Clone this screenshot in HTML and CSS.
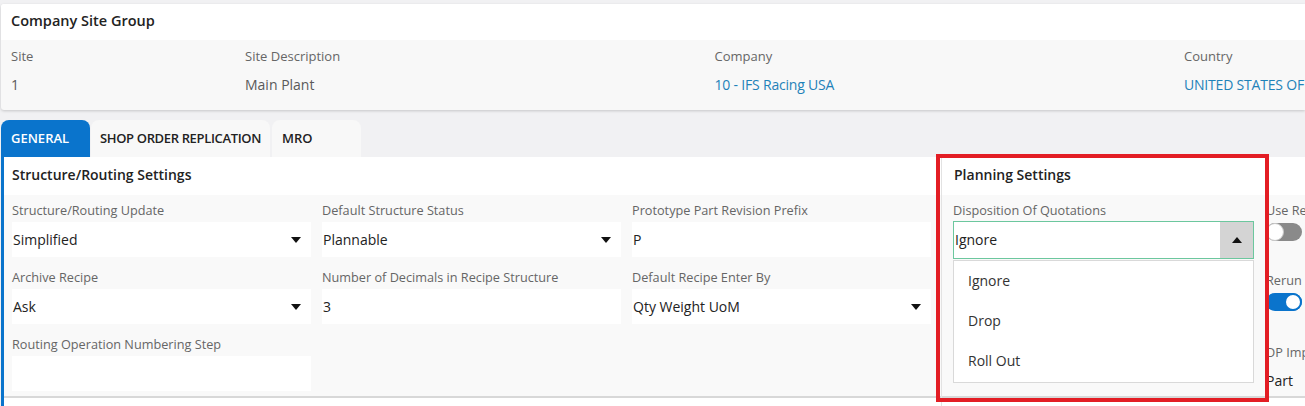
FILE: index.html
```html
<!DOCTYPE html>
<html lang="en">
<head>
<meta charset="utf-8">
<title>Company Site Group</title>
<link rel="stylesheet" href="styles.css">
</head>
<body>
<div class="page">
  <section class="card">
    <header class="card-head">Company Site Group</header>
    <div class="card-body">
      <div class="cf cf-site"><div class="cf-lbl">Site</div><div class="cf-val">1</div></div>
      <div class="cf"><div class="cf-lbl">Site Description</div><div class="cf-val">Main Plant</div></div>
      <div class="cf"><div class="cf-lbl">Company</div><div class="cf-val link">10 - IFS Racing USA</div></div>
      <div class="cf cf-last"><div class="cf-lbl">Country</div><div class="cf-val link">UNITED STATES OF AMERICA</div></div>
    </div>
  </section>

  <nav class="tabs">
    <div class="tab active tab-general">GENERAL</div>
    <div class="tab tab-shop">SHOP ORDER REPLICATION</div>
    <div class="tab tab-mro">MRO</div>
  </nav>

  <div class="panel">
    <section class="group group-structure">
      <header class="group-head">Structure/Routing Settings</header>
      <div class="group-body grid3">
        <div class="field">
          <div class="lbl">Structure/Routing Update</div>
          <div class="input select"><span>Simplified</span><i class="caret"></i></div>
        </div>
        <div class="field">
          <div class="lbl">Default Structure Status</div>
          <div class="input select"><span>Plannable</span><i class="caret"></i></div>
        </div>
        <div class="field">
          <div class="lbl">Prototype Part Revision Prefix</div>
          <div class="input"><span>P</span></div>
        </div>
        <div class="field">
          <div class="lbl">Archive Recipe</div>
          <div class="input select"><span>Ask</span><i class="caret"></i></div>
        </div>
        <div class="field">
          <div class="lbl">Number of Decimals in Recipe Structure</div>
          <div class="input"><span>3</span></div>
        </div>
        <div class="field">
          <div class="lbl">Default Recipe Enter By</div>
          <div class="input select"><span>Qty Weight UoM</span><i class="caret"></i></div>
        </div>
        <div class="field">
          <div class="lbl">Routing Operation Numbering Step</div>
          <div class="input"></div>
        </div>
      </div>
    </section>

    <section class="group group-planning">
      <header class="group-head">Planning Settings</header>
      <div class="group-body">
        <div class="field">
          <div class="lbl">Disposition Of Quotations</div>
          <div class="combo">
            <div class="combo-box"><span class="combo-text">Ignore</span><span class="combo-btn"><i class="caret-up"></i></span></div>
            <ul class="combo-list">
              <li>Ignore</li>
              <li>Drop</li>
              <li>Roll Out</li>
            </ul>
          </div>
        </div>
      </div>
    </section>

    <section class="group group-extra">
      <header class="group-head"></header>
      <div class="group-body extra-body">
        <div class="lbl">Use Re</div>
        <div class="toggle off"><i></i></div>
        <div class="lbl lbl-rerun">Rerun I</div>
        <div class="toggle on"><i></i></div>
        <div class="lbl lbl-dp">DP Imp</div>
        <div class="plain-val">Part</div>
      </div>
    </section>
  </div>

  <div class="highlight"></div>
</div>
</body>
</html>
```

FILE: styles.css
```css
* { box-sizing: border-box; }

html, body {
  margin: 0;
  padding: 0;
}

body {
  width: 1305px;
  height: 406px;
  overflow: hidden;
  background: #f1f1f3;
  font-family: "Open Sans", "Noto Sans", sans-serif;
  color: #2b2b2b;
}

.page {
  position: relative;
  width: 1305px;
  height: 406px;
  padding-top: 4px;
  overflow: hidden;
}

/* ---------- top card ---------- */
.card {
  margin-left: 1px;
  width: 1304px;
  background: #f8f8f8;
  box-shadow: 0 1px 3px rgba(0,0,0,0.18);
  border-radius: 3px 0 0 3px;
}

.card-head {
  height: 36px;
  line-height: 33px;
  padding-left: 10px;
  background: #fff;
  font-size: 14.5px;
  font-weight: 600;
  color: #222;
  border-radius: 3px 0 0 0;
}

.card-body {
  display: flex;
  height: 70px;
  padding: 6px 0 0 10px;
  overflow: hidden;
}

.cf { width: 469.5px; flex: none; }
.cf-site { width: 234px; }
.cf-last { flex: 1 1 auto; width: auto; min-width: 0; overflow: hidden; }

.cf-lbl {
  height: 20px;
  line-height: 20px;
  font-size: 13px;
  color: #666;
}

.cf-val {
  margin-top: 9px;
  height: 20px;
  line-height: 20px;
  font-size: 14px;
  color: #5a5a5a;
  white-space: nowrap;
}

.cf-val.link { color: #1f82b8; letter-spacing: -0.2px; }

/* ---------- tabs ---------- */
.tabs {
  display: flex;
  margin-top: 10px;
  height: 37px;
  padding-left: 1px;
}

.tab {
  height: 37px;
  line-height: 37px;
  padding-left: 9px;
  font-size: 13px;
  font-weight: 600;
  color: #222;
  background: #f8f8f8;
  border-radius: 8px 8px 0 0;
  flex: none;
  white-space: nowrap;
  overflow: hidden;
}

.tab.active {
  background: #0a74cc;
  color: #fff;
  padding-left: 10px;
}

.tab-general { width: 89px; }
.tab-shop { width: 179px; margin-left: 1px; letter-spacing: -0.35px; }
.tab-mro { width: 89px; margin-left: 2px; padding-left: 10px; }

/* ---------- content panel ---------- */
.panel {
  display: flex;
  margin-left: 1px;
  width: 1304px;
  height: 250px;
  background: #fff;
  border-left: 3px solid #0a74cc;
  overflow: hidden;
}

.group {
  flex: none;
  display: flex;
  flex-direction: column;
}

.group-head {
  height: 38px;
  line-height: 36px;
  background: #fff;
  font-size: 14px;
  font-weight: 600;
  color: #222;
}

.group-body {
  background: #f9f9f9;
  flex: none;
  height: 203px;
  border-bottom: 2px solid #d8d8d8;
}

.group-structure { width: 937px; }
.group-structure .group-head { padding-left: 8px; }

.grid3 {
  display: grid;
  grid-template-columns: repeat(3, 299px);
  column-gap: 11px;
  row-gap: 11px;
  align-content: start;
  padding: 6px 0 0 8px;
}

.lbl {
  height: 20px;
  line-height: 18px;
  font-size: 12.7px;
  color: #666;
  white-space: nowrap;
}

.input {
  position: relative;
  height: 35px;
  margin-top: 1px;
  background: #fff;
  font-size: 14px;
  line-height: 35px;
  padding-left: 1px;
  color: #222;
}

.caret {
  position: absolute;
  right: 10px;
  top: 15px;
  width: 0;
  height: 0;
  border-left: 5.5px solid transparent;
  border-right: 5.5px solid transparent;
  border-top: 6px solid #111;
}

/* planning group */
.group-planning {
  width: 321px;
  border-left: 1px solid #e2e2e2;
}

.group-planning .group-head { padding-left: 12px; }
.group-planning .group-body { padding: 6px 0 0 11px; }

.combo {
  position: relative;
  width: 301px;
}

.combo-box {
  display: flex;
  height: 38px;
  border: 1px solid #6cc79e;
  background: #fff;
}

.combo-text {
  flex: 1;
  line-height: 36px;
  padding-left: 1px;
  font-size: 14px;
  color: #222;
}

.combo-btn {
  position: relative;
  width: 33px;
  background: #d4d4d4;
}

.caret-up {
  position: absolute;
  left: 12px;
  top: 15px;
  width: 0;
  height: 0;
  border-left: 5.5px solid transparent;
  border-right: 5.5px solid transparent;
  border-bottom: 6px solid #111;
}

.combo-list {
  position: absolute;
  left: 0;
  top: 39px;
  width: 301px;
  height: 123px;
  margin: 0;
  padding: 0;
  list-style: none;
  background: #fff;
  border: 1px solid #d9d9d9;
}

.combo-list li {
  height: 40px;
  line-height: 40px;
  padding-left: 14px;
  font-size: 14px;
  color: #333;
}

/* extra group (cut off at right edge) */
.group-extra { flex: 1 1 auto; min-width: 0; overflow: hidden; }
.group-extra .group-head { padding-left: 4px; }

.extra-body {
  padding: 6px 0 0 4px;
}

.toggle {
  position: relative;
  width: 36px;
  height: 18px;
  margin-top: 2px;
  border-radius: 9px;
}

.toggle i {
  position: absolute;
  top: 0;
  width: 18px;
  height: 18px;
  border-radius: 50%;
  background: #fff;
}

.toggle.off { background: #8a8a8a; }
.toggle.off i { left: 0; border: 1px solid #c8c8c8; }

.toggle.on { background: #0a74cc; }
.toggle.on i { right: 0; border: 2px solid #0a74cc; }

.lbl-rerun { margin-top: 30px; }
.lbl-dp { margin-top: 32px; }

.plain-val {
  margin-top: 8px;
  font-size: 14px;
  color: #222;
  line-height: 20px;
}

/* ---------- annotation overlay ---------- */
.highlight {
  position: absolute;
  left: 936px;
  top: 154px;
  width: 333px;
  height: 248px;
  border: 4px solid #e31d24;
  pointer-events: none;
}
```
